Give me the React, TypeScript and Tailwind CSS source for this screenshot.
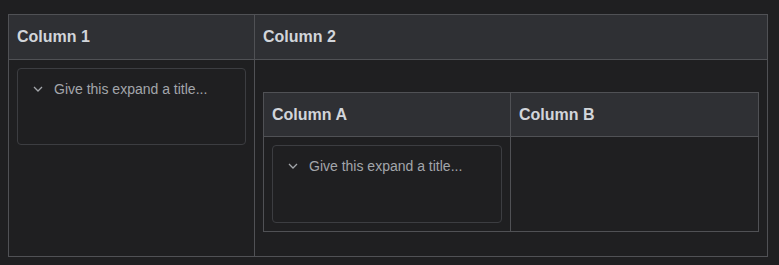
import React from 'react';

function Expand({ height }: { height: string }) {
  return (
    <div className={`rounded-[4px] border border-[#3c3d41] pl-[15px] pt-[10px] ${height}`}>
      <div className="flex items-center h-5">
        <svg width="10" height="6" viewBox="0 0 10 6" className="shrink-0">
          <polyline points="1,1 5,5 9,1" fill="none" stroke="#a3a6ab" strokeWidth="1.3" />
        </svg>
        <span className="ml-[11px] text-[14px] leading-5 text-[#a3a6ab]">Give this expand a title...</span>
      </div>
    </div>
  );
}

export default function App() {
  return (
    <div className="min-h-[265px] bg-[#1f1f21] pt-[14px] pl-[8px] font-['Liberation_Sans',Arial,sans-serif]">
      <div className="w-[760px] border border-[#505155]">
        <div className="flex h-[45px] border-b border-[#505155] bg-[#2f3034]">
          <div className="w-[246px] border-r border-[#505155] flex items-center pl-2 text-[16px] font-bold text-[#d2d5da]">
            Column 1
          </div>
          <div className="flex-1 flex items-center pl-2 text-[16px] font-bold text-[#d2d5da]">
            Column 2
          </div>
        </div>
        <div className="flex h-[196px]">
          <div className="w-[246px] border-r border-[#505155] p-2">
            <Expand height="h-[77px]" />
          </div>
          <div className="flex-1 px-2 pt-8 pb-6">
            <div className="border border-[#505155]">
              <div className="flex h-[44px] border-b border-[#505155] bg-[#2f3034]">
                <div className="w-[247px] border-r border-[#505155] flex items-center pl-2 text-[16px] font-bold text-[#d2d5da]">
                  Column A
                </div>
                <div className="flex-1 flex items-center pl-2 text-[16px] font-bold text-[#d2d5da]">
                  Column B
                </div>
              </div>
              <div className="flex h-[94px]">
                <div className="w-[247px] border-r border-[#505155] p-2">
                  <Expand height="h-[78px]" />
                </div>
                <div className="flex-1" />
              </div>
            </div>
          </div>
        </div>
      </div>
    </div>
  );
}
